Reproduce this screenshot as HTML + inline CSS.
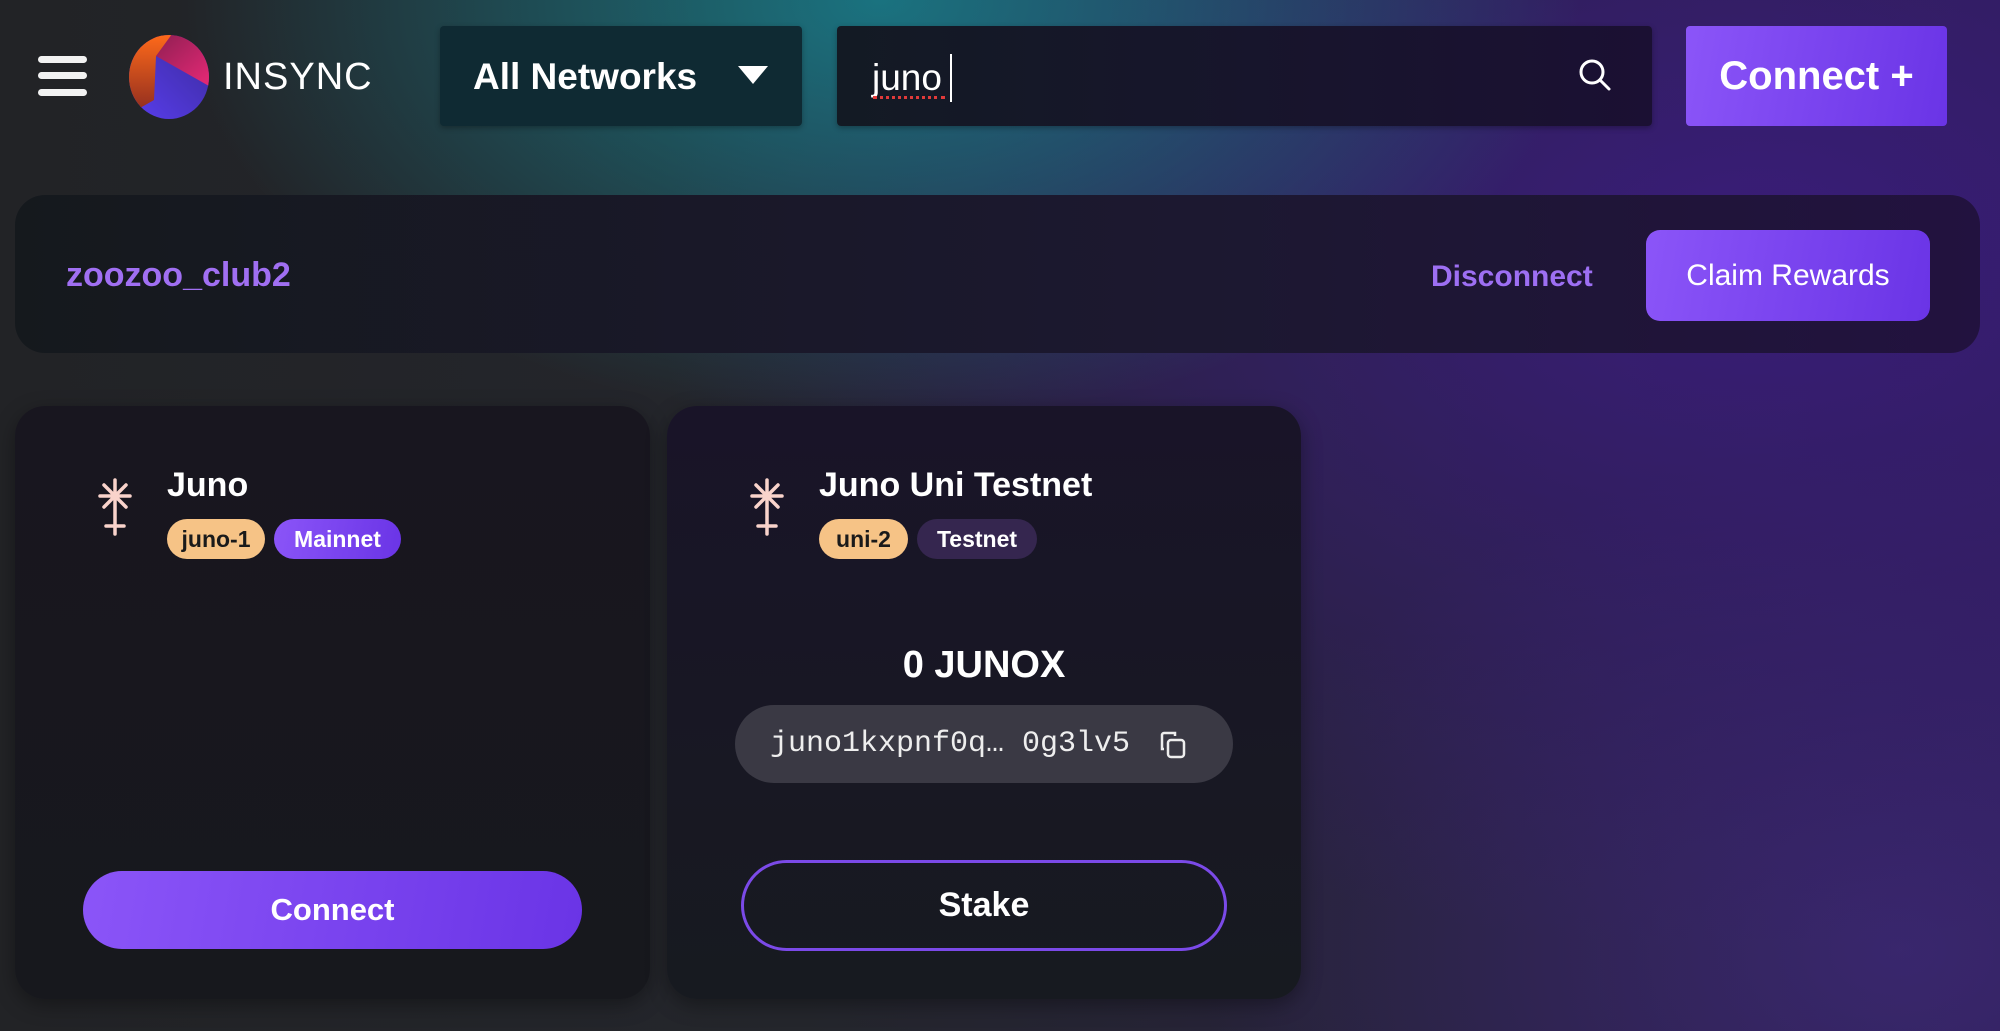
<!DOCTYPE html>
<html><head><meta charset="utf-8"><style>
*{box-sizing:border-box;margin:0;padding:0}
html,body{width:2000px;height:1031px;overflow:hidden}
body{font-family:"Liberation Sans",sans-serif;color:#fff;position:relative;
background:
radial-gradient(ellipse 700px 420px at 880px 0px, rgba(24,128,140,.85), rgba(24,128,140,0) 100%),
radial-gradient(ellipse 1100px 700px at 1750px 250px, rgba(60,28,130,.85), rgba(60,28,130,0) 100%),
radial-gradient(ellipse 700px 500px at 1900px 950px, rgba(70,45,140,.55), rgba(70,45,140,0) 100%),
linear-gradient(90deg,#222326 0%,#24262c 40%,#2a1e4a 100%);}
.abs{position:absolute}
.hb{left:38px;width:49px;height:7px;border-radius:4px;background:#f2f2f2}
.box{border-radius:4px}
.b{font-weight:bold}
.card{border-radius:30px;background:linear-gradient(180deg,#18161f,#17181d);box-shadow:0 6px 20px rgba(0,0,0,.35)}
.badge{height:40px;border-radius:20px;font-size:23px;font-weight:bold;line-height:40px;text-align:center}
.grad{background:linear-gradient(100deg,#8b55f8,#6a34e6)}
</style></head><body>
<div class="abs hb" style="top:56px"></div>
<div class="abs hb" style="top:72px"></div>
<div class="abs hb" style="top:89px"></div>
<svg class="abs" style="left:126px;top:34px" width="86" height="86" viewBox="0 0 86 86">
<defs><linearGradient id="a" x1="0" y1="0" x2="0" y2="1"><stop offset="0" stop-color="#ff6a1a"/><stop offset="1" stop-color="#8a2a20"/></linearGradient>
<linearGradient id="b" x1="0" y1="0" x2="1" y2="1"><stop offset="0" stop-color="#8a1e50"/><stop offset="1" stop-color="#ef2a7a"/></linearGradient>
<linearGradient id="c" x1="0" y1="1" x2="1" y2="0"><stop offset="0" stop-color="#5a3ef0"/><stop offset="1" stop-color="#3a2a9a"/></linearGradient>
<clipPath id="e"><ellipse cx="43" cy="43" rx="40" ry="42"/></clipPath></defs>
<g clip-path="url(#e)">
<rect width="86" height="86" fill="url(#c)"/>
<polygon points="24,0 90,0 90,56 30,22" fill="url(#b)"/>
<polygon points="0,0 46,0 30,22 28,66 0,82" fill="url(#a)"/>
<polygon points="30,22 82,52 28,66" fill="none"/>
</g>
</svg>
<div class="abs" style="left:223px;top:55px;font-size:38px;letter-spacing:1px;line-height:44px">INSYNC</div>
<div class="abs box" style="left:440px;top:26px;width:362px;height:100px;background:#0f2a33;box-shadow:0 2px 6px rgba(0,0,0,.3)"></div>
<div class="abs b" style="left:473px;top:55px;font-size:37px;line-height:44px">All Networks</div>
<svg class="abs" style="left:738px;top:66px" width="30" height="20"><path d="M0 0H30L15 18Z" fill="#fff"/></svg>
<div class="abs box" style="left:837px;top:26px;width:815px;height:100px;background:linear-gradient(90deg,#131a24,#1b1033);box-shadow:0 2px 6px rgba(0,0,0,.3)"></div>
<div class="abs" style="left:872px;top:56px;font-size:37px;line-height:44px">juno</div>
<div class="abs" style="left:950px;top:54px;width:2px;height:48px;background:#fff"></div>
<div class="abs" style="left:873px;top:96px;width:72px;height:0;border-top:3px dotted #e03a3a"></div>
<svg class="abs" style="left:1578px;top:58px" width="34" height="34" viewBox="0 0 34 34"><circle cx="14" cy="14" r="11" fill="none" stroke="#fff" stroke-width="3"/><path d="M22 22L31 31" stroke="#fff" stroke-width="3" stroke-linecap="round"/></svg>
<div class="abs box grad b" style="left:1686px;top:26px;width:261px;height:100px;font-size:40px;line-height:100px;text-align:center">Connect +</div>

<div class="abs" style="left:15px;top:195px;width:1965px;height:158px;border-radius:30px;background:linear-gradient(90deg,#15191d,#1c1830 60%,#22123f)"></div>
<div class="abs b" style="left:66px;top:255px;font-size:34px;line-height:40px;color:#a06ff2">zoozoo_club2</div>
<div class="abs b" style="left:1431px;top:257px;font-size:30px;line-height:40px;color:#9d6ff3">Disconnect</div>
<div class="abs grad" style="left:1646px;top:230px;width:284px;height:91px;border-radius:14px;font-size:30px;line-height:91px;text-align:center">Claim Rewards</div>

<div class="abs card" style="left:15px;top:406px;width:635px;height:593px"></div>
<div class="abs card" style="left:667px;top:406px;width:634px;height:593px;background:linear-gradient(180deg,#191428,#171a20)"></div>

<svg class="abs" style="left:96px;top:476px" width="40" height="64" viewBox="0 0 40 64"><g stroke="#f9d3cb" stroke-width="3.5" stroke-linecap="round"><path d="M19 4V58M4 20H34M8 9L30 31M30 9L8 31M10 50H28"/></g></svg>
<div class="abs b" style="left:167px;top:465px;font-size:34px;line-height:40px">Juno</div>
<div class="abs badge" style="left:167px;top:519px;width:98px;background:#f6c386;color:#1a1a1a">juno-1</div>
<div class="abs badge grad" style="left:274px;top:519px;width:127px">Mainnet</div>
<div class="abs grad b" style="left:83px;top:871px;width:499px;height:78px;border-radius:39px;font-size:31px;line-height:78px;text-align:center">Connect</div>

<svg class="abs" style="left:748px;top:476px" width="40" height="64" viewBox="0 0 40 64"><g stroke="#f9d3cb" stroke-width="3.5" stroke-linecap="round"><path d="M19 4V58M4 20H34M8 9L30 31M30 9L8 31M10 50H28"/></g></svg>
<div class="abs b" style="left:819px;top:465px;font-size:34px;line-height:40px">Juno Uni Testnet</div>
<div class="abs badge" style="left:819px;top:519px;width:89px;background:#f6c386;color:#1a1a1a">uni-2</div>
<div class="abs badge" style="left:917px;top:519px;width:120px;background:#35264f">Testnet</div>
<div class="abs b" style="left:667px;top:643px;width:634px;text-align:center;font-size:38px;line-height:44px">0 JUNOX</div>
<div class="abs" style="left:735px;top:705px;width:498px;height:78px;border-radius:39px;background:#3a3944"></div>
<div class="abs" style="left:770px;top:726px;font-family:'Liberation Mono',monospace;font-size:30px;line-height:36px;color:#eee">juno1kxpnf0q… 0g3lv5</div>
<svg class="abs" style="left:1157px;top:729px" width="32" height="32" viewBox="0 0 32 32"><g fill="none" stroke="#eee" stroke-width="2.5"><rect x="11" y="11" width="16" height="17" rx="3"/><path d="M7 20H5V6a2 2 0 0 1 2-2h11v3"/></g></svg>
<div class="abs b" style="left:741px;top:860px;width:486px;height:91px;border-radius:46px;border:3px solid #7b4ae8;font-size:34px;line-height:85px;text-align:center">Stake</div>
</body></html>
